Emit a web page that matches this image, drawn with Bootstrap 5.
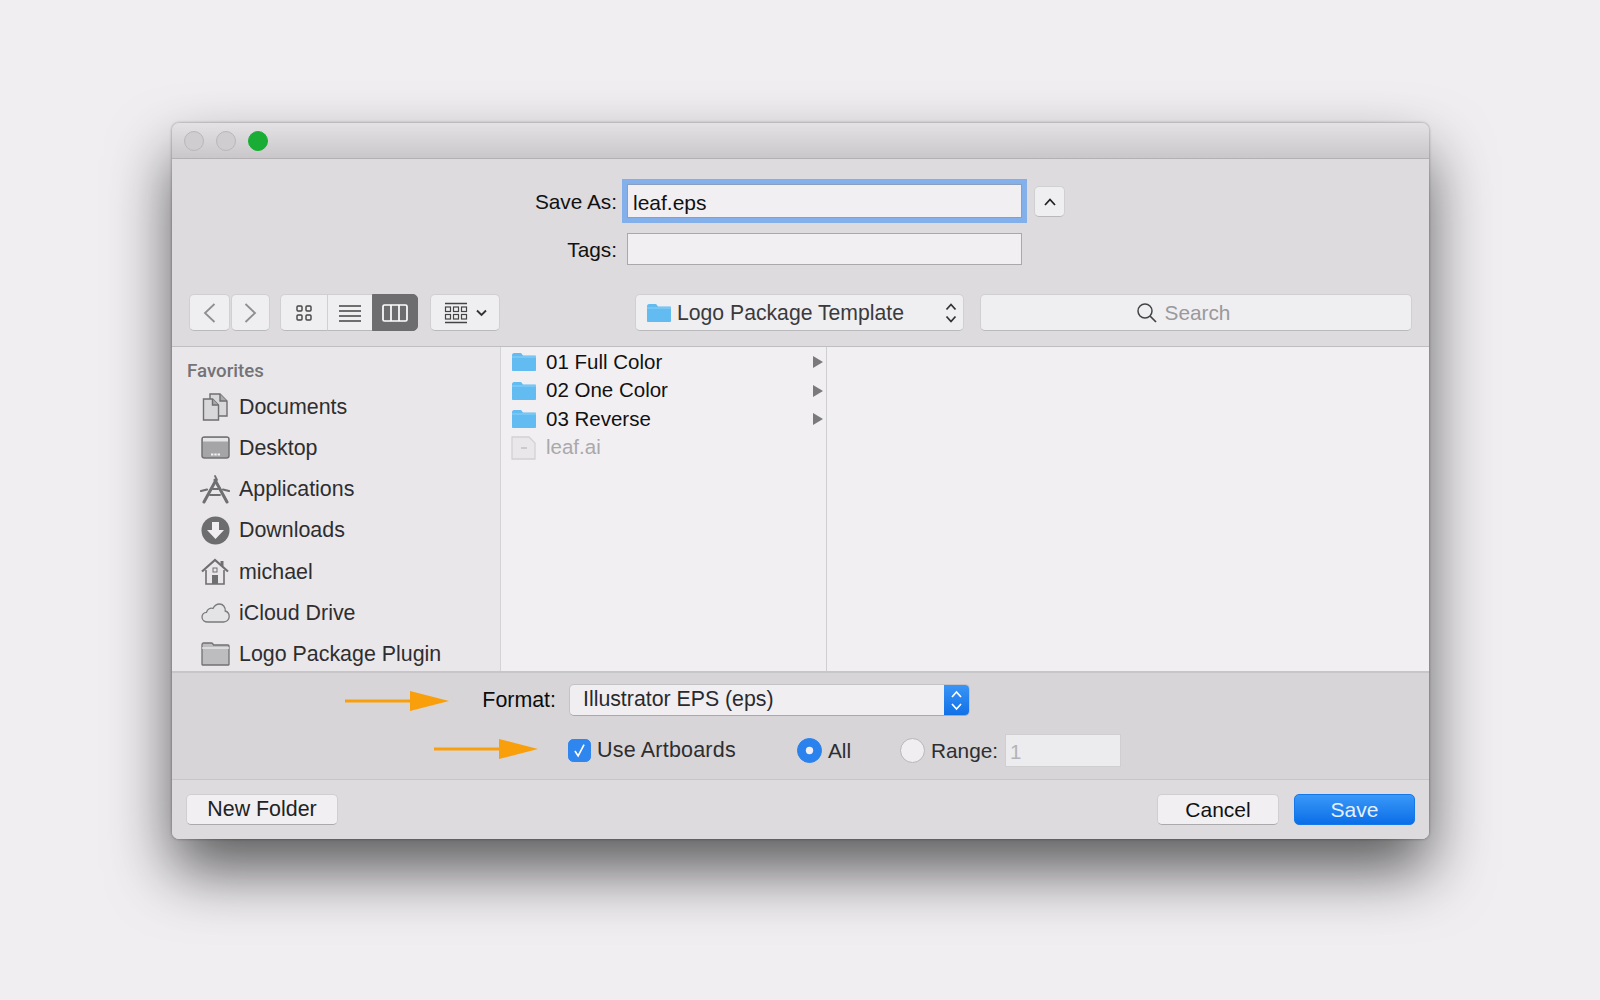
<!DOCTYPE html>
<html lang="en">
<head>
  <meta charset="UTF-8" />
  <title>Save As</title>
  <meta name="viewport" content="width=device-width, initial-scale=1.0"/>
  <link href="https://cdn.jsdelivr.net/npm/bootstrap@5.3.3/dist/css/bootstrap.min.css" rel="stylesheet">
  <style>
    html, body { height: 100%; }
    body { background: #f0eef1; font-family: "Liberation Sans", Arial, sans-serif; font-size: 20.8px; color: #1c1c1e; overflow: hidden; padding: 123px 170px 0 172px; }
    .dlg { width: 1257px; height: 716px; border-radius: 7px; background: #dddbde; box-shadow: 0 32px 62px rgba(0,0,0,.62), 0 0 3px rgba(0,0,0,.4); overflow: hidden; }
    .titlebar { height: 36px; padding-left: 12px; gap: 12px; background: linear-gradient(#e4e2e5, #c9c7ca); border-bottom: 1px solid #b3b1b4; }
    .light { width: 20px; height: 20px; border-radius: 50%; background: #cfcdd0; border: 1px solid #b9b7ba; }
    .light-go { background: #1aad35; border-color: #1aad35; }
    .form-top { padding-top: 25px; }
    .lbl { width: 445px; text-align: right; margin-right: 10px; padding-top: 1px; color: #111; }
    .fld { width: 395px; border: 1px solid #a9a8ab; background: #f1eff2; border-radius: 0; font-size: 21px; line-height: 1; padding: 3px 0 0 5px; color: #111; }
    .fld:focus, .fld-focus { box-shadow: 0 0 0 5px #83b0ea; border-color: #8a9fc0; background: #f1eff2; }
    .fld-focus { height: 34px; }
    .fld-tags { height: 32px; margin-top: 15px; }
    .lbl.fld-tags { padding-top: 2px; }
    .up-btn { width: 31px; height: 31px; margin-left: 12px; margin-top: 1px; }
    .tool-row { padding: 0 0 0 17px; margin-top: 29px; height: 37px; }
    .tbtn { background: #efeef1; border: 1px solid #d0cfd2; border-bottom-color: #b9b8bb; border-radius: 5px; padding: 0; height: 37px; color: #444; }
    .tbtn:hover { background: #efeef1; border-color: #d0cfd2; }
    .up-btn.tbtn { height: 31px; }
    .w-back { width: 41px; margin-right: 1px; }
    .w-fwd { width: 39px; margin-right: 10px; }
    .view-seg .tbtn { height: 37px; }
    .seg-a { width: 48px; } .seg-b { width: 46px; } .seg-c { width: 46px; background: #6d6c6f !important; border-color: #6d6c6f !important; }
    .w-arr { width: 70px; margin-left: 12px; margin-right: 135px; }
    .w-path { width: 329px; margin-right: 16px; padding: 0 5px 0 10px; color: #3a3a3c; font-size: 21.200px; gap: 5px; }
    .w-search { width: 432px; color: #9a999c; font-size: 20.8px; gap: 8px; padding-right: 26px; }
    .main-area { height: 327px; margin-top: 15px; border-top: 1px solid #bfbec1; border-bottom: 2px solid #c6c5c8; overflow: hidden; }
    .side { width: 329px; flex: none; background: #e9e7ea; border-right: 1px solid #d3d2d5; padding-top: 13px; }
    .side-head { height: 26px; padding-left: 15px; margin-top: -1px; margin-bottom: 1px; font-family: Roboto, "Liberation Sans", sans-serif; font-weight: 500; font-size: 18.7px; line-height: 24px; color: #747376; }
    .side-row { height: 41.3px; padding: 0 0 0 28px; gap: 9px; background: transparent; border: 0; font-size: 21.4px; color: #2e2e30; }
    .side-ico { width: 30px; flex: none; }
    .col-one { width: 326px; flex: none; background: #f1eff2; border-right: 1px solid #cfced1; padding-top: 1px; }
    .col-two { background: #f1eff2; }
    .file-row { height: 28.5px; padding: 0 3px 0 10px; gap: 9px; background: transparent; border: 0; font-size: 20.5px; color: #111; }
    .file-row.dim { color: #a9a8ab; }
    .file-ico { width: 26px; flex: none; }
    .tri { width: 0; height: 0; border-left: 10px solid #7a797c; border-top: 6px solid transparent; border-bottom: 6px solid transparent; margin-left: auto; }
    .opts { height: 107px; padding-top: 11px; background: #d7d5d8; border-bottom: 1px solid #c6c5c8; }
    .lbl-fmt { width: 384px; text-align: right; margin-right: 13px; color: #0c0c0c; font-size: 21.4px; line-height: 32px; }
    .fmt-sel { width: 401px; height: 32px; background: #f0eef1; border: 1px solid #c3c2c5; border-bottom-color: #a9a8ab; border-radius: 5px; padding-left: 13px; overflow: hidden; color: #2a2a2c; font-size: 21.3px; }
    .fmt-arr { width: 25px; height: 32px; margin-left: auto; background: linear-gradient(#3b96f7, #0f6fe6); }
    .opt-row { margin-top: 18px; height: 33px; padding-left: 396px; }
    .chk { width: 23px; height: 23px; margin: 0 6px 0 0; border-radius: 4px; background-color: #2f86ee !important; border-color: #2f86ee !important; }
    .chk:checked { background-image: url("data:image/svg+xml,%3csvg xmlns='http://www.w3.org/2000/svg' viewBox='0 0 23 23'%3e%3cpath d='M6.500 12l3.500 5.500L16.500 5' fill='none' stroke='%23fff' stroke-width='1.800'/%3e%3c/svg%3e"); }
    .rad { width: 25px; height: 25px; margin: 0 6px 0 0; background-color: #f0eef1; border: 1px solid #b7b6b9; }
    .rad:checked { background-color: #2a82ee; border-color: #2a82ee; background-image: url("data:image/svg+xml,%3csvg xmlns='http://www.w3.org/2000/svg' viewBox='0 0 25 25'%3e%3ccircle cx='12.500' cy='12.500' r='4' fill='%23f0eef1'/%3e%3c/svg%3e"); }
    .chk-lbl { width: 200px; color: #2e2e30; font-size: 21.500px; letter-spacing: .2px; }
    .all-lbl { width: 72px; color: #2e2e30; }
    .rng-lbl { width: 65px; margin-right: 9px; color: #2e2e30; }
    .rng-in { width: 116px; height: 33px; background: #ececef; border: 1px solid #cfced1; color: #b4b3b6; padding: 2px 0 0 4px; font-size: 20.5px; }
    .foot { height: 59px; padding: 14px 14px 0 14px; background: #dddbde; }
    .fbtn { height: 31px; padding: 0; font-size: 21.400px; line-height: 1; background: #f1eff2; border: 1px solid #cfced1; border-bottom-color: #aaa9ac; border-radius: 5px; color: #111; }
    .fbtn:hover { background: #f1eff2; color: #111; }
    .w-new { width: 152px; color: #222; padding-top: 1px; }
    .w-cancel { width: 122px; margin-left: auto; margin-right: 15px; font-size: 21px; }
    .w-save { width: 121px; background: linear-gradient(#3a98f8, #0b6ee8); border-color: #1478ea; color: #e6f0fd; font-size: 21px; }
    .w-save:hover { background: linear-gradient(#3a98f8, #0b6ee8); color: #e6f0fd; }
    .note-arrow { position: absolute; }
    .note-a { left: 173px; top: 17px; }
    .note-b { left: 262px; top: 65px; }
  </style>
</head>
<body>

  <svg width="0" height="0" class="position-absolute">
    <symbol id="blue-folder" viewBox="0 0 26 20">
      <path d="M1 3.500C1 2 1.800 1 3 1h6c1 0 1.600.5 2.200 1.400L12 3.500h12c.6 0 1 .4 1 1V18c0 .6-.4 1-1 1H2c-.6 0-1-.4-1-1z" fill="#62bcf2"/>
      <path d="M1 5h24" stroke="#8ed0f6" stroke-width="1"/>
    </symbol>
  </svg>

  <div class="dlg d-flex flex-column">

    <div class="titlebar d-flex align-items-center">
      <span class="light"></span><span class="light"></span><span class="light light-go"></span>
    </div>

    <div class="form-top">
      <div class="d-flex align-items-center">
        <label class="lbl">Save As:</label>
        <input class="form-control fld fld-focus" type="text" value="leaf.eps">
        <button class="btn tbtn up-btn d-flex align-items-center justify-content-center">
          <svg width="12" height="8" viewBox="0 0 12 8"><path d="M1 7l5-5.500L11 7" fill="none" stroke="#222" stroke-width="1.800"/></svg>
        </button>
      </div>
      <div class="d-flex align-items-center">
        <label class="lbl fld-tags d-flex align-items-center justify-content-end">Tags:</label>
        <input class="form-control fld fld-tags" type="text">
      </div>
    </div>

    <div class="tool-row d-flex align-items-center">
      <button class="btn tbtn w-back d-flex align-items-center justify-content-center">
        <svg width="13" height="20" viewBox="0 0 13 20"><path d="M11.500 1L2 10l9.500 9" fill="none" stroke="#8f8e91" stroke-width="1.800"/></svg>
      </button>
      <button class="btn tbtn w-fwd d-flex align-items-center justify-content-center">
        <svg width="13" height="20" viewBox="0 0 13 20"><path d="M1.500 1L11 10l-9.500 9" fill="none" stroke="#8f8e91" stroke-width="1.800"/></svg>
      </button>
      <div class="btn-group view-seg">
        <button class="btn tbtn seg-a d-flex align-items-center justify-content-center">
          <svg width="16" height="16" viewBox="0 0 16 16"><g fill="none" stroke="#444" stroke-width="1.400"><rect x="1" y="1" width="5" height="5" rx="1"/><rect x="10" y="1" width="5" height="5" rx="1"/><rect x="1" y="10" width="5" height="5" rx="1"/><rect x="10" y="10" width="5" height="5" rx="1"/></g></svg>
        </button>
        <button class="btn tbtn seg-b d-flex align-items-center justify-content-center">
          <svg width="24" height="18" viewBox="0 0 24 18"><path d="M1 2h22M1 7h22M1 12h22M1 17h22" stroke="#444" stroke-width="1.400"/></svg>
        </button>
        <button class="btn tbtn seg-c d-flex align-items-center justify-content-center">
          <svg width="26" height="18" viewBox="0 0 26 18"><g fill="none" stroke="#fff" stroke-width="1.700"><rect x="1" y="1" width="24" height="16" rx="1.500"/><path d="M9 1v16M17 1v16"/></g></svg>
        </button>
      </div>
      <button class="btn tbtn w-arr d-flex align-items-center justify-content-center gap-2">
        <svg width="24" height="22" viewBox="0 0 24 22"><path d="M1 1.500h22M1 20.500h22" stroke="#444" stroke-width="1.400"/><g fill="none" stroke="#444" stroke-width="1.200"><rect x="1.500" y="5" width="5" height="4.500"/><rect x="9.500" y="5" width="5" height="4.500"/><rect x="17.500" y="5" width="5" height="4.500"/><rect x="1.500" y="12.500" width="5" height="4.500"/><rect x="9.500" y="12.500" width="5" height="4.500"/><rect x="17.500" y="12.500" width="5" height="4.500"/></g></svg>
        <svg width="11" height="8" viewBox="0 0 11 8"><path d="M1 1.500l4.500 4.500L10 1.500" fill="none" stroke="#333" stroke-width="1.900"/></svg>
      </button>
      <button class="btn tbtn w-path d-flex align-items-center">
        <svg width="26" height="20"><use href="#blue-folder"/></svg>
        <span>Logo Package Template</span>
        <svg class="ms-auto" width="14" height="24" viewBox="0 0 14 24"><path d="M2.500 8.500L7 3.500l4.500 5M2.500 15.500l4.500 5 4.500-5" fill="none" stroke="#333" stroke-width="1.800"/></svg>
      </button>
      <button class="btn tbtn w-search d-flex align-items-center justify-content-center">
        <svg width="21" height="21" viewBox="0 0 21 21"><circle cx="9" cy="9" r="7" fill="none" stroke="#444" stroke-width="1.500"/><path d="M14 14l6 6" stroke="#444" stroke-width="1.700"/></svg>
        <span>Search</span>
      </button>
    </div>

    <div class="main-area d-flex">
      <div class="side">
        <div class="side-head">Favorites</div>
        <ul class="list-group list-group-flush">
          <li class="list-group-item side-row d-flex align-items-center">
            <span class="side-ico d-flex justify-content-center">
              <svg width="27" height="28" viewBox="0 0 27 28"><g stroke="#6f6e71" stroke-width="1.400"><path d="M8 1h10l7 7v15H8z" fill="#d8d7da"/><path d="M18 1v7h7" fill="#a9a8ab"/><path d="M1.500 6h9l6 6v15h-15z" fill="#d8d7da"/><path d="M10.500 6v6h6" fill="#a9a8ab"/></g></svg>
            </span>Documents
          </li>
          <li class="list-group-item side-row d-flex align-items-center">
            <span class="side-ico d-flex justify-content-center">
              <svg width="29" height="23" viewBox="0 0 29 23"><rect x="1" y="1" width="27" height="21" rx="2.500" fill="#a5a4a7" stroke="#727174" stroke-width="1.500"/><rect x="2" y="2" width="25" height="3.500" fill="#e6e5e8"/><path d="M10 18.500h2.400M13.300 18.500h2.400M16.600 18.500h2.400" stroke="#f2f1f4" stroke-width="2"/></svg>
            </span>Desktop
          </li>
          <li class="list-group-item side-row d-flex align-items-center">
            <span class="side-ico d-flex justify-content-center">
              <svg width="30" height="29" viewBox="0 0 30 29"><g stroke="#6f6e71" fill="none" stroke-linecap="round"><path d="M4 27L15.500 6" stroke-width="3"/><path d="M27 27L15 5" stroke-width="3"/><path d="M15 1l2 4" stroke-width="1.800"/><path d="M1 16l6-1.500M13 14h5M23 14.500l6 1.500" stroke-width="2.200"/><path d="M10 20h10" stroke-width="1.800"/></g></svg>
            </span>Applications
          </li>
          <li class="list-group-item side-row d-flex align-items-center">
            <span class="side-ico d-flex justify-content-center">
              <svg width="29" height="29" viewBox="0 0 29 29"><circle cx="14.500" cy="14.500" r="14" fill="#6d6c6f"/><path d="M11 6h7v8h5l-8.500 9L6 14h5z" fill="#f0eef1"/></svg>
            </span>Downloads
          </li>
          <li class="list-group-item side-row d-flex align-items-center">
            <span class="side-ico d-flex justify-content-center">
              <svg width="28" height="27" viewBox="0 0 28 27"><path d="M5 12v14h18V12" fill="#e9e7ea" stroke="#6f6e71" stroke-width="1.600"/><path d="M1 13.500L14 2l13 11.500" fill="none" stroke="#6f6e71" stroke-width="2.200"/><path d="M21 3v5" stroke="#6f6e71" stroke-width="3"/><rect x="11" y="17" width="6" height="9" fill="#6f6e71"/><rect x="12" y="10" width="4" height="4" fill="none" stroke="#6f6e71"/></svg>
            </span>michael
          </li>
          <li class="list-group-item side-row d-flex align-items-center">
            <span class="side-ico d-flex justify-content-center">
              <svg width="29" height="20" viewBox="0 0 29 20"><path d="M7 19C3.500 19 1 17 1 14c0-2.500 2-4.500 4.500-4.700C6.500 6 9.500 4.500 12 5.500 13.500 2.500 16 1 18.500 1c3.500 0 6 3 5.700 7 2.500.7 4 3 4 5.500 0 3-2.500 5.500-5.500 5.500z" fill="#e4e3e6" stroke="#7a797c" stroke-width="1.300"/></svg>
            </span>iCloud Drive
          </li>
          <li class="list-group-item side-row d-flex align-items-center">
            <span class="side-ico d-flex justify-content-center">
              <svg width="29" height="24" viewBox="0 0 29 24"><path d="M1 2.500C1 1.500 1.800 1 2.500 1h8c1 0 1.500.7 2 2H27c.6 0 1 .4 1 1v18.500c0 .3-.2.5-.5.5h-26c-.3 0-.5-.2-.5-.5z" fill="#bdbcbf" stroke="#717073" stroke-width="1.300"/><path d="M1 6h27" stroke="#e9e7ea" stroke-width="1.400"/></svg>
            </span>Logo Package Plugin
          </li>
        </ul>
      </div>

      <div class="col-one">
        <ul class="list-group list-group-flush">
          <li class="list-group-item file-row d-flex align-items-center">
            <svg class="file-ico" width="26" height="20"><use href="#blue-folder"/></svg>01 Full Color<span class="tri"></span>
          </li>
          <li class="list-group-item file-row d-flex align-items-center">
            <svg class="file-ico" width="26" height="20"><use href="#blue-folder"/></svg>02 One Color<span class="tri"></span>
          </li>
          <li class="list-group-item file-row d-flex align-items-center">
            <svg class="file-ico" width="26" height="20"><use href="#blue-folder"/></svg>03 Reverse<span class="tri"></span>
          </li>
          <li class="list-group-item file-row dim d-flex align-items-center">
            <svg class="file-ico" width="26" height="24" viewBox="0 0 26 24"><path d="M1 1h17l6 6v16H1z" fill="#e9e7ea" stroke="#d2d1d4" stroke-width="1.300"/><path d="M10 12h6" stroke="#bcbbbe" stroke-width="1.300"/></svg>leaf.ai
          </li>
        </ul>
      </div>
      <div class="col-two flex-grow-1"></div>
    </div>

    <div class="opts position-relative">
      <div class="d-flex align-items-center">
        <label class="lbl-fmt">Format:</label>
        <div class="fmt-sel d-flex align-items-center">
          <span>Illustrator EPS (eps)</span>
          <span class="fmt-arr d-flex align-items-center justify-content-center">
            <svg width="13" height="23" viewBox="0 0 13 23"><path d="M2 8l4.500-5L11 8M2 15l4.500 5L11 15" fill="none" stroke="#fff" stroke-width="1.700"/></svg>
          </span>
        </div>
      </div>
      <div class="opt-row d-flex align-items-center">
        <input class="form-check-input chk" type="checkbox" checked>
        <label class="chk-lbl">Use Artboards</label>
        <input class="form-check-input rad" type="radio" name="rng" checked>
        <label class="all-lbl">All</label>
        <input class="form-check-input rad" type="radio" name="rng">
        <label class="rng-lbl">Range:</label>
        <input class="rng-in" type="text" value="1">
      </div>
      <svg class="note-arrow note-a" width="104" height="22" viewBox="0 0 104 22"><path d="M0 11h66" stroke="#f99f0c" stroke-width="3"/><path d="M65 1l39 10-39 10z" fill="#f99f0c"/></svg>
      <svg class="note-arrow note-b" width="104" height="22" viewBox="0 0 104 22"><path d="M0 11h66" stroke="#f99f0c" stroke-width="3"/><path d="M65 1l39 10-39 10z" fill="#f99f0c"/></svg>
    </div>

    <div class="foot d-flex align-items-start">
      <button class="btn fbtn w-new">New Folder</button>
      <button class="btn fbtn w-cancel">Cancel</button>
      <button class="btn fbtn w-save">Save</button>
    </div>

  </div>

  <script src="https://cdn.jsdelivr.net/npm/bootstrap@5.3.3/dist/js/bootstrap.bundle.min.js"></script>
</body>
</html>
